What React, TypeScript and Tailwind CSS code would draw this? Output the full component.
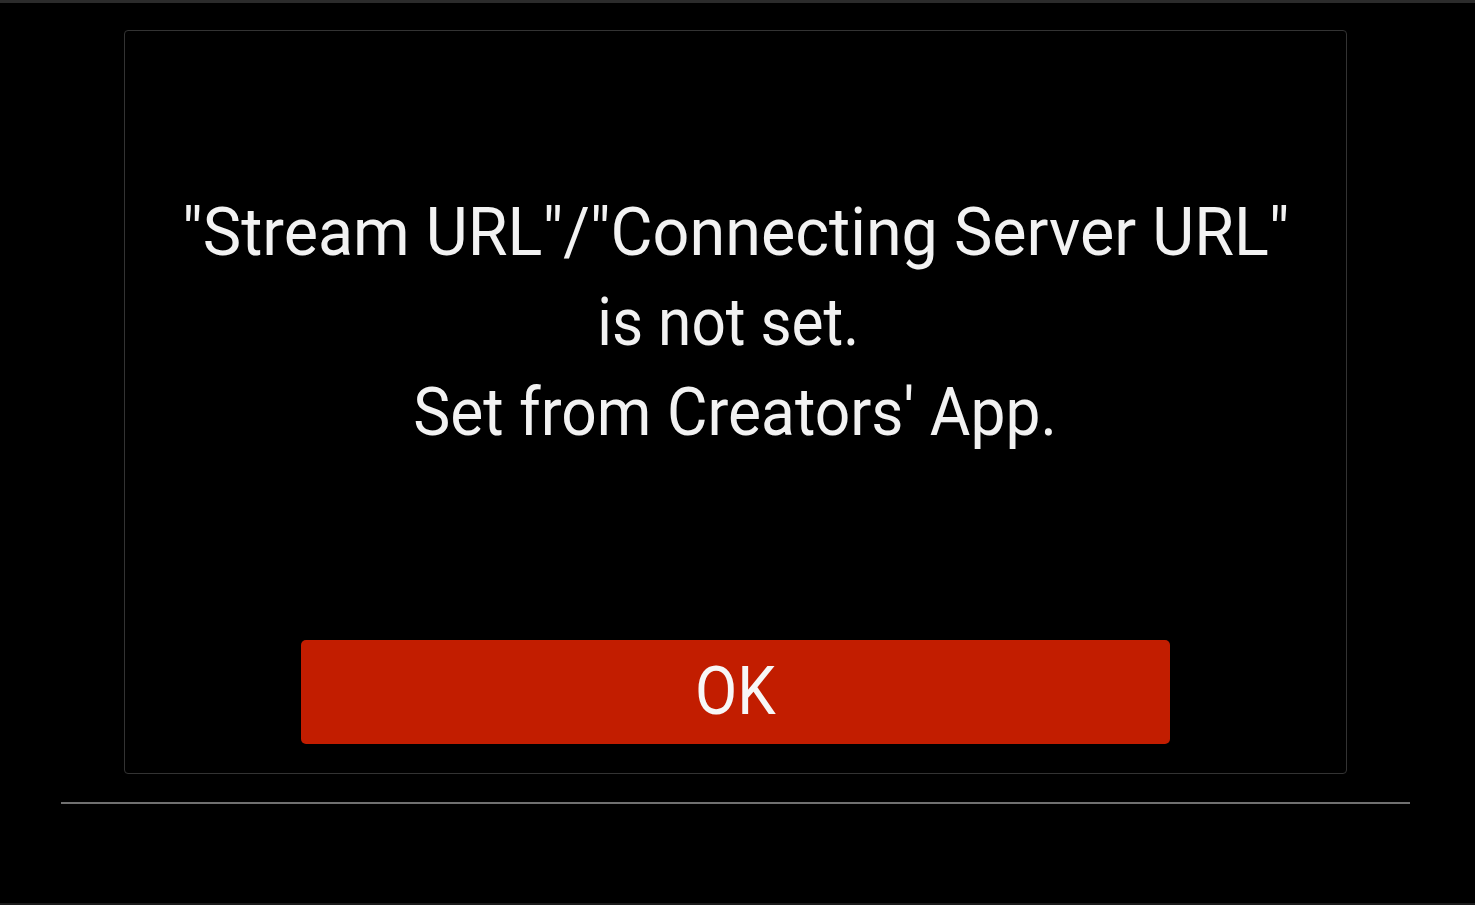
export default function App() {
  const font = { fontFamily: "Roboto, 'Liberation Sans', sans-serif" };

  return (
    <div
      className="w-[1475px] h-[905px] bg-black border-t-[3px] border-t-[#2b2b2b] border-b-2 border-b-[#1b1b1b] flex flex-col overflow-hidden"
      style={font}
    >
      {/* dialog */}
      <div className="ml-[124px] mt-[27px] w-[1223px] h-[744px] border border-[#333333] rounded-[4px] flex flex-col">
        <div className="pt-[156px] flex flex-col items-center text-[#f2f2f2] text-[67px] leading-[90px]">
          <span className="block scale-x-[0.965] whitespace-nowrap">"Stream URL"/"Connecting Server URL"</span>
          <span className="block scale-x-[0.9] pr-[16px] whitespace-nowrap">is not set.</span>
          <span className="block scale-x-[0.93] whitespace-nowrap">Set from Creators' App.</span>
        </div>

        <div className="mt-auto mb-[29px] px-[176px]">
          <button className="w-full h-[104px] bg-[#c21d00] rounded-[5px] flex items-center justify-center text-[#f7f7f7] text-[66px] leading-none">
            <span className="block scale-x-[0.93]">OK</span>
          </button>
        </div>
      </div>

      {/* separator */}
      <div className="ml-[61px] mt-[28px] w-[1349px] h-[2px] bg-[#707070]" />
    </div>
  );
}
